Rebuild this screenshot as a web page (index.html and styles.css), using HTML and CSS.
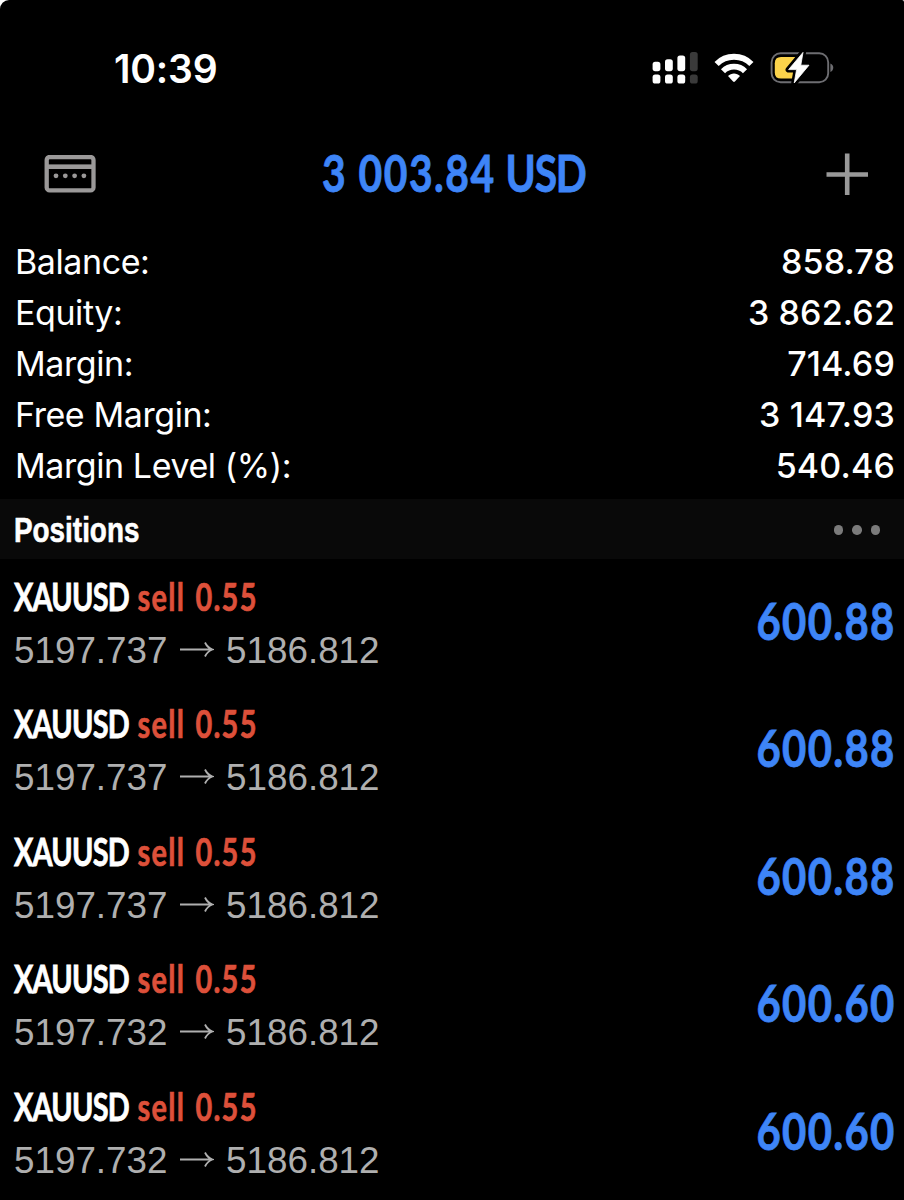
FILE: index.html
```
<!DOCTYPE html>
<html lang="en">
<head>
  <meta charset="utf-8">
  <title>Trade</title>
  <link rel="stylesheet" href="styles.css">
</head>
<body>
  <div class="screen">
    <div class="status-bar">
      <span class="time">10:39</span>
      <div class="status-icons">
        <svg class="signal" width="46" height="32" viewBox="0 0 46 32">
          <g fill="#fff">
            <rect x="0.6" y="9.8" width="7.8" height="9.4" rx="2.6"/>
            <rect x="13" y="7.2" width="7.8" height="12" rx="2.6"/>
            <rect x="25.4" y="3.4" width="7.8" height="15.8" rx="2.6"/>
            <rect x="0.6" y="22.6" width="7.8" height="9" rx="2.6"/>
            <rect x="13" y="22.6" width="7.8" height="9" rx="2.6"/>
            <rect x="25.4" y="22.6" width="7.8" height="9" rx="2.6"/>
          </g>
          <g fill="#3a3a3a">
            <rect x="37.9" y="0" width="7.8" height="19.2" rx="2.6"/>
            <rect x="37.9" y="22.6" width="7.8" height="9" rx="2.6"/>
          </g>
        </svg>
        <svg class="wifi" width="40" height="30" viewBox="0 0 40 30">
          <g fill="none" stroke="#fff" stroke-width="5.8">
            <path d="M2.6 11 C12 1.3 28 1.3 37.4 11"/>
            <path d="M9 18.2 C15 12.2 25 12.2 31 18.2"/>
          </g>
          <path fill="#fff" d="M14 23 C17.2 19.6 22.8 19.6 26 23 L20.9 28.6 Q20 29.5 19.1 28.6 Z"/>
        </svg>
        <svg class="battery" width="64" height="36" viewBox="0 0 64 36">
          <rect x="1.6" y="3.2" width="56.6" height="29" rx="9" fill="none" stroke="#6d6d71" stroke-width="1.9"/>
          <path d="M60.4 13.6 C64.2 14.8 64.2 20.8 60.4 22 Z" fill="#6d6d71"/>
          <path d="M11 7 H25 V28.6 H11 Q4.8 28.6 4.8 22.4 V13.2 Q4.8 7 11 7 Z" fill="#fbd34b"/>
          <path d="M33 2.4 L18.6 19.6 H26.6 L24.2 33 L39 15.2 H30.8 Z" fill="#fff" stroke="#000" stroke-width="6" stroke-linejoin="round"/>
          <path d="M33 2.4 L18.6 19.6 H26.6 L24.2 33 L39 15.2 H30.8 Z" fill="#fff" stroke="#fff" stroke-width="0.8" stroke-linejoin="round"/>
        </svg>
      </div>
    </div>

    <div class="nav-bar">
      <svg class="icon-card" width="52" height="38" viewBox="0 0 52 38">
        <rect x="2.7" y="2" width="46.8" height="33.4" rx="3" fill="none" stroke="#9b9999" stroke-width="4.3"/>
        <rect x="3" y="9.4" width="46" height="4.6" fill="#9b9999"/>
        <g fill="#9b9999">
          <circle cx="12" cy="20.8" r="2.4"/>
          <circle cx="21.3" cy="20.8" r="2.4"/>
          <circle cx="30.6" cy="20.8" r="2.4"/>
          <circle cx="39.9" cy="20.8" r="2.4"/>
        </g>
      </svg>
      <h1 class="total"><span class="amount">3 003.84</span> <span class="currency">USD</span></h1>
      <svg class="icon-plus" width="42" height="42" viewBox="0 0 42 42">
        <path d="M21.2 0.5 V42 M0.5 21.5 H42" stroke="#999" stroke-width="4.6"/>
      </svg>
    </div>

    <div class="account">
      <div class="account-row"><span class="label">Balance:</span><span class="value">858.78</span></div>
      <div class="account-row"><span class="label">Equity:</span><span class="value">3 862.62</span></div>
      <div class="account-row"><span class="label">Margin:</span><span class="value">714.69</span></div>
      <div class="account-row"><span class="label">Free Margin:</span><span class="value">3 147.93</span></div>
      <div class="account-row"><span class="label">Margin Level (%):</span><span class="value">540.46</span></div>
    </div>

    <div class="section-header">
      <h2 class="section-title">Positions</h2>
      <div class="dots"><i></i><i></i><i></i></div>
    </div>

    <div class="positions">
      <div class="position">
        <div class="info">
          <div class="deal"><span class="symbol">XAUUSD</span><span class="side">sell 0.55</span></div>
          <div class="prices"><span>5197.737</span><svg class="arrow" width="34" height="18" viewBox="0 0 34 18"><path d="M0 7.5 H32 M25 0.5 Q27.5 5.8 32.5 7.5 Q27.5 9.2 25 14.5"/></svg><span>5186.812</span></div>
        </div>
        <div class="profit">600.88</div>
      </div>
      <div class="position">
        <div class="info">
          <div class="deal"><span class="symbol">XAUUSD</span><span class="side">sell 0.55</span></div>
          <div class="prices"><span>5197.737</span><svg class="arrow" width="34" height="18" viewBox="0 0 34 18"><path d="M0 7.5 H32 M25 0.5 Q27.5 5.8 32.5 7.5 Q27.5 9.2 25 14.5"/></svg><span>5186.812</span></div>
        </div>
        <div class="profit">600.88</div>
      </div>
      <div class="position">
        <div class="info">
          <div class="deal"><span class="symbol">XAUUSD</span><span class="side">sell 0.55</span></div>
          <div class="prices"><span>5197.737</span><svg class="arrow" width="34" height="18" viewBox="0 0 34 18"><path d="M0 7.5 H32 M25 0.5 Q27.5 5.8 32.5 7.5 Q27.5 9.2 25 14.5"/></svg><span>5186.812</span></div>
        </div>
        <div class="profit">600.88</div>
      </div>
      <div class="position">
        <div class="info">
          <div class="deal"><span class="symbol">XAUUSD</span><span class="side">sell 0.55</span></div>
          <div class="prices"><span>5197.732</span><svg class="arrow" width="34" height="18" viewBox="0 0 34 18"><path d="M0 7.5 H32 M25 0.5 Q27.5 5.8 32.5 7.5 Q27.5 9.2 25 14.5"/></svg><span>5186.812</span></div>
        </div>
        <div class="profit">600.60</div>
      </div>
      <div class="position">
        <div class="info">
          <div class="deal"><span class="symbol">XAUUSD</span><span class="side">sell 0.55</span></div>
          <div class="prices"><span>5197.732</span><svg class="arrow" width="34" height="18" viewBox="0 0 34 18"><path d="M0 7.5 H32 M25 0.5 Q27.5 5.8 32.5 7.5 Q27.5 9.2 25 14.5"/></svg><span>5186.812</span></div>
        </div>
        <div class="profit">600.60</div>
      </div>
    </div>
  </div>
</body>
</html>
```
FILE: styles.css
```
* { box-sizing: border-box; }
body { margin: 0; background: #fff; font-family: Inter, "Liberation Sans", sans-serif; }
.screen {
  width: 904px;
  height: 1200px;
  overflow: hidden;
  background: #000;
  color: #fff;
  border-radius: 9px 2px 0 0;
}

/* status bar */
.status-bar {
  display: flex;
  justify-content: space-between;
  align-items: center;
  height: 136px;
  padding: 0 70px 0 114px;
}
.time { font-size: 39px; font-weight: 600; letter-spacing: -0.2px; }
.status-icons { display: flex; align-items: center; gap: 16px; }

/* nav bar */
.nav-bar {
  display: flex;
  justify-content: space-between;
  align-items: center;
  height: 76px;
  padding: 0 36px 0 44px;
}
.total {
  margin: 0 14px 3px 0;
  font-family: Lato, sans-serif;
  font-size: 51px;
  font-weight: 700;
  white-space: nowrap;
  color: #3e85f7;
  -webkit-text-stroke: 0.8px #3e85f7;
  transform: scaleX(0.8);
}
.amount { letter-spacing: 1.9px; }
.currency { letter-spacing: -1.6px; }

/* account summary */
.account { height: 287px; padding: 24px 9px 0 15px; }
.account-row {
  display: flex;
  justify-content: space-between;
  align-items: center;
  height: 51px;
  font-size: 34px;
}
.label { letter-spacing: -0.42px; }
.value { font-weight: 500; letter-spacing: 0.15px; }

.section-header {
  display: flex;
  justify-content: space-between;
  align-items: center;
  height: 60px;
  padding: 2px 24px 0 14px;
  background: #090909;
}
.section-title {
  margin: 0;
  font-family: "Liberation Sans", sans-serif;
  font-size: 35.5px;
  font-weight: bold;
  -webkit-text-stroke: 0.6px #fff;
  transform: scaleX(0.785);
  transform-origin: left;
}
.dots { display: flex; gap: 9px; }
.dots i { width: 9.5px; height: 9.5px; border-radius: 50%; background: #7b7b7b; }

/* positions */
.position {
  display: flex;
  justify-content: space-between;
  height: 127.4px;
  padding: 12px 9px 0 14px;
}
.deal {
  display: flex;
  gap: 11px;
  height: 53px;
  line-height: 52px;
  font-family: Lato, sans-serif;
  font-size: 37.5px;
  font-weight: 700;
  transform: scaleX(0.77);
  transform-origin: left;
}
.symbol { letter-spacing: -1px; -webkit-text-stroke: 0.8px #fff; }
.side { letter-spacing: 1.7px; word-spacing: 2.5px; color: #dd503a; -webkit-text-stroke: 0.7px #dd503a; }
.prices {
  display: flex;
  align-items: center;
  gap: 12.3px;
  height: 54px;
  font-family: "Liberation Sans", sans-serif;
  font-size: 36.8px;
  color: #afafaf;
}
.arrow path { fill: none; stroke: #afafaf; stroke-width: 1.8; }
.profit {
  height: 100px;
  line-height: 99px;
  font-family: Lato, sans-serif;
  font-size: 51px;
  font-weight: 700;
  letter-spacing: 1.6px;
  margin-right: -1px;
  color: #3e85f7;
  -webkit-text-stroke: 0.8px #3e85f7;
  transform: scaleX(0.82);
  transform-origin: right;
}
```
